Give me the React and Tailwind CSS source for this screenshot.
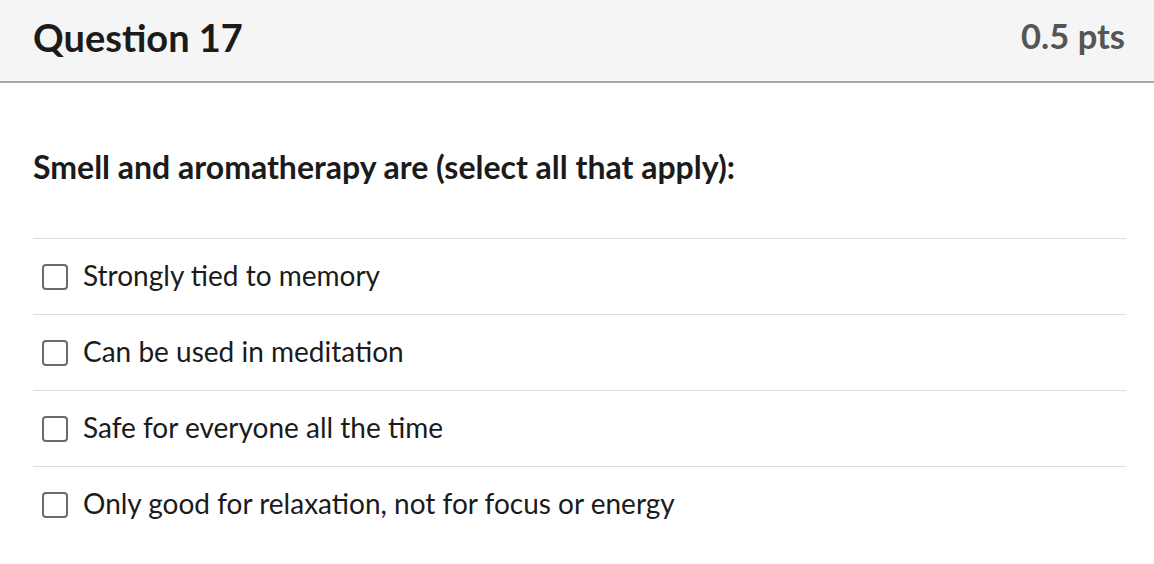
export default function App() {
  const options = [
    "Strongly tied to memory",
    "Can be used in meditation",
    "Safe for everyone all the time",
    "Only good for relaxation, not for focus or energy",
  ];
  return (
    <div className="w-[1154px] h-[564px] bg-white overflow-hidden" style={{ fontFamily: "Lato, 'Open Sans', sans-serif" }}>
      <div className="h-[83px] bg-[#f5f5f5] border-b-2 border-[#a8a8a8] flex items-center justify-between pl-[33px] pr-[29px] pb-[8px]">
        <div className="text-[38px] font-bold text-[#1b1b1b] leading-none">Question 17</div>
        <div className="text-[34.5px] font-bold text-[#555555] leading-none">0.5 pts</div>
      </div>
      <div className="pl-[33px] pr-[28px]">
        <div className="pt-[68px] pb-[55px] text-[32px] font-bold text-[#1b1b1b] leading-none">
          Smell and aromatherapy are (select all that apply):
        </div>
        <div>
          {options.map((o) => (
            <div key={o} className="h-[76px] border-t border-[#dcdcdc] flex items-center">
              <div className="ml-[9px] w-[26px] h-[26px] border-2 border-[#6b6b6b] rounded-[4px]" />
              <div className="ml-[15px] mb-[3px] text-[28px] text-[#1b1b1b] leading-none">{o}</div>
            </div>
          ))}
        </div>
      </div>
    </div>
  );
}
